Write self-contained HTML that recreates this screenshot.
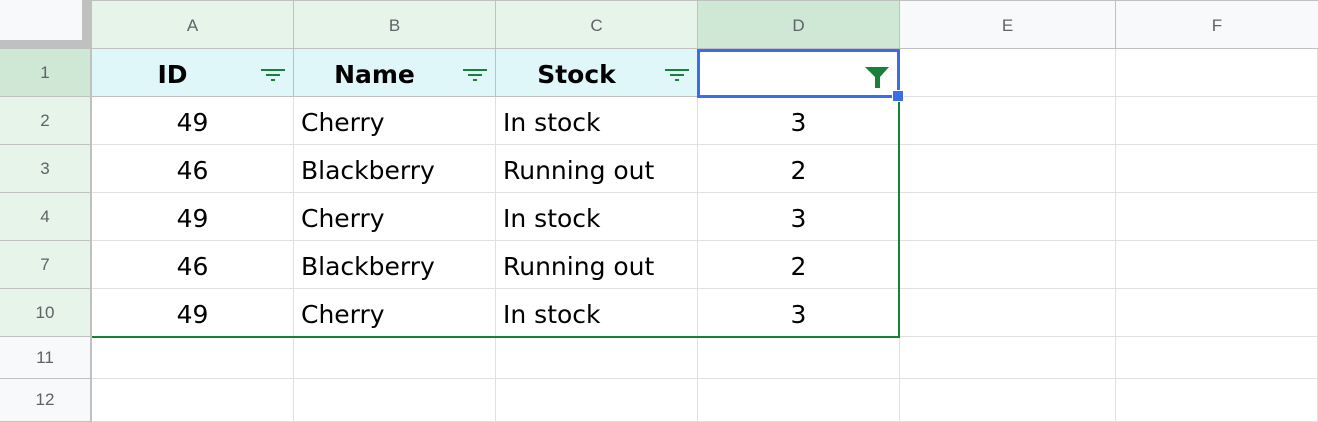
<!DOCTYPE html>
<html><head><style>
body{margin:0;width:1318px;height:422px;overflow:hidden;background:#fff;font-family:"Liberation Sans",sans-serif;position:relative}
div{position:absolute;box-sizing:border-box}
.ch{top:1px;height:47px;background:#e6f4ea;color:#5f6368;font-size:17px;text-align:center;line-height:49px;border-right:1px solid #c0c0c0}
.rh{left:0;width:90px;background:#e6f4ea;color:#5f6368;font-size:17px;text-align:center;border-bottom:1px solid #c0c0c0}
.c{font-family:"DejaVu Sans",sans-serif;font-size:25px;color:#000;border-right:1px solid #e0e0e0;border-bottom:1px solid #e0e0e0;white-space:nowrap}
.hl{background:#e0f7fa;font-weight:bold;text-align:center;border-color:#c0c0c0;padding-right:40px}
.f{position:absolute;right:8px;top:20px;width:24px;height:12px}
</style></head><body>
<div style="left:0;top:0;width:1318px;height:49px;background:#c0c0c0"></div>
<div style="left:0;top:0;width:82px;height:40px;background:#f8f9fa"></div>
<div class="ch" style="left:92px;width:202px">A</div>
<div class="ch" style="left:294px;width:202px">B</div>
<div class="ch" style="left:496px;width:202px">C</div>
<div class="ch" style="left:698px;width:202px;background:#cee8d5">D</div>
<div class="ch" style="left:900px;width:216px;background:#f8f9fa">E</div>
<div class="ch" style="left:1116px;width:202px;background:#f8f9fa;border:none">F</div>
<div style="left:90px;top:0;width:2px;height:422px;background:#c0c0c0"></div>
<div class="rh" style="top:49px;height:48px;line-height:47px;background:#cee8d5">1</div>
<div class="rh" style="top:97px;height:48px;line-height:47px">2</div>
<div class="rh" style="top:145px;height:48px;line-height:47px">3</div>
<div class="rh" style="top:193px;height:48px;line-height:47px">4</div>
<div class="rh" style="top:241px;height:48px;line-height:47px">7</div>
<div class="rh" style="top:289px;height:48px;line-height:47px">10</div>
<div class="rh" style="top:337px;height:42px;line-height:41px;background:#f8f9fa">11</div>
<div class="rh" style="top:379px;height:43px;line-height:41px;background:#f8f9fa">12</div>
<div id="g"></div>
<script>
var cols=[[92,202],[294,202],[496,202],[698,202],[900,216],[1116,202]];
var rows=[[49,48],[97,48],[145,48],[193,48],[241,48],[289,48],[337,42],[379,43]];
var data=[["ID","Name","Stock",""],["49","Cherry","In stock","3"],["46","Blackberry","Running out","2"],["49","Cherry","In stock","3"],["46","Blackberry","Running out","2"],["49","Cherry","In stock","3"]];
var h="";
rows.forEach(function(r,ri){cols.forEach(function(c,ci){
 var t=(data[ri]&&data[ri][ci])||"";var cls="c";var st="left:"+c[0]+"px;top:"+r[0]+"px;width:"+c[1]+"px;height:"+r[1]+"px;line-height:"+(r[1]+3)+"px;";
 if(ri==0&&ci<3){cls+=" hl";}
 else if(ci==0||ci==3){st+="text-align:center;";}
 else st+="padding-left:7px;";
 var icon="";
 if(ri==0&&ci<3)icon='<svg class="f" viewBox="0 0 24 12"><rect x="0" y="0" width="24" height="2" fill="#188038"/><rect x="5" y="5" width="14" height="2" fill="#188038"/><rect x="10" y="10" width="4" height="2" fill="#188038"/></svg>';
 h+='<div class="'+cls+'" style="'+st+'">'+t+icon+'</div>';
});});
document.getElementById("g").outerHTML=h;
</script>
<div style="left:92px;top:336px;width:808px;height:2px;background:#188038"></div>
<div style="left:898px;top:49px;width:2px;height:289px;background:#188038"></div>
<svg style="position:absolute;left:865px;top:67px" width="24" height="22" viewBox="0 0 24 22"><path d="M0 0H24L15 10V21H10V10Z" fill="#188038"/></svg>
<div style="left:697px;top:49px;width:203px;height:49px;border:3px solid #3a6ee8"></div>
<div style="left:892px;top:90px;width:12px;height:12px;background:#3a6ee8;border:1px solid #fff"></div>
</body></html>
